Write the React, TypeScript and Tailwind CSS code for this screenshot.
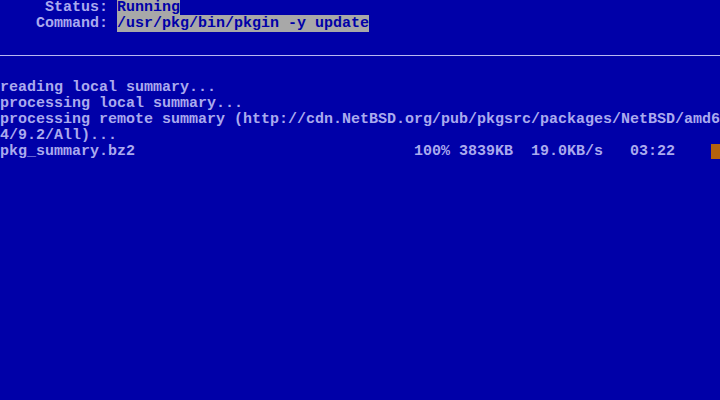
import React from "react";

const Row = ({ children }: { children?: React.ReactNode }) => (
  <div className="h-4 leading-4 whitespace-pre">{children}</div>
);

export default function App() {
  return (
    <div
      className="w-[720px] h-[400px] bg-[#0000a8] text-[#aaaaee] text-[15px] font-bold overflow-hidden flex flex-col"
      style={{ fontFamily: '"Liberation Mono", "DejaVu Sans Mono", monospace' }}
    >
      <Row>
        {"     Status: "}
        <span className="bg-[#a8a8a8] text-[#0000a8]">Running</span>
      </Row>
      <Row>
        {"    Command: "}
        <span className="bg-[#a8a8a8] text-[#0000a8]">/usr/pkg/bin/pkgin -y update</span>
      </Row>
      <Row />
      <div className="h-4 pt-[7px]">
        <div className="h-px bg-[#b8b8f0]" />
      </div>
      <Row />
      <Row>reading local summary...</Row>
      <Row>processing local summary...</Row>
      <Row>processing remote summary (http://cdn.NetBSD.org/pub/pkgsrc/packages/NetBSD/amd6</Row>
      <Row>4/9.2/All)...</Row>
      <div className="h-4 flex">
        <span className="whitespace-pre leading-4">
          {"pkg_summary.bz2                               100% 3839KB  19.0KB/s   03:22    "}
        </span>
        <span className="w-[9px] h-[15px] bg-[#b4620e]" />
      </div>
    </div>
  );
}
